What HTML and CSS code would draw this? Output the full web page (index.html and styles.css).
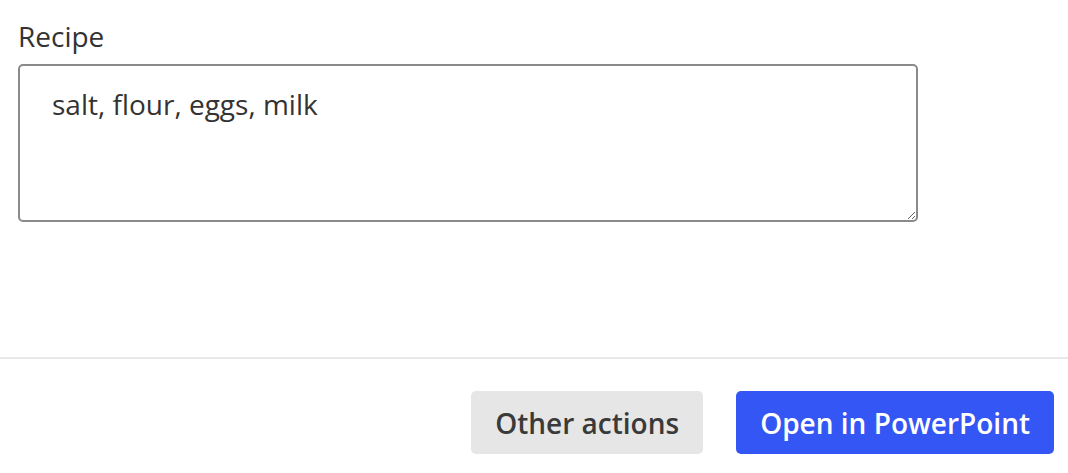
FILE: index.html
```html
<!DOCTYPE html>
<html lang="en">
<head>
<meta charset="utf-8">
<title>Recipe</title>
<link rel="stylesheet" href="styles.css">
</head>
<body>
<div class="dialog">
  <div class="content">
    <label class="field-label" for="recipe">Recipe</label>
    <textarea id="recipe" class="field-input">salt, flour, eggs, milk</textarea>
  </div>
  <div class="footer">
    <button class="btn btn-secondary" type="button">Other actions</button>
    <button class="btn btn-primary" type="button">Open in PowerPoint</button>
  </div>
</div>
</body>
</html>
```
FILE: styles.css
```css
html, body {
  margin: 0;
  padding: 0;
  background: #ffffff;
}
body {
  font-family: "Open Sans", "Noto Sans", sans-serif;
  color: #333333;
}
.dialog {
  display: flex;
  flex-direction: column;
  width: 1068px;
  height: 473px;
}
.content {
  box-sizing: border-box;
  height: 357px;
  padding: 15px 18px 0 18px;
  display: flex;
  flex-direction: column;
  gap: 7px;
}
.field-label {
  font-size: 28px;
  line-height: 42px;
  color: #333333;
}
.field-input {
  box-sizing: border-box;
  width: 900px;
  height: 158px;
  margin: 0;
  padding: 17px 32px;
  border: 2px solid #8a8a8a;
  border-radius: 5px;
  font-family: "Open Sans", "Noto Sans", sans-serif;
  font-size: 28px;
  line-height: 42px;
  color: #333333;
  resize: both;
  outline: none;
}
.footer {
  border-top: 2px solid #e8e8e8;
  display: flex;
  justify-content: flex-end;
  gap: 33px;
  padding: 32px 14px 0 0;
}
.btn {
  height: 63px;
  padding: 0 24px;
  border: none;
  border-radius: 5px;
  font-family: "Open Sans", "Noto Sans", sans-serif;
  font-size: 28px;
  font-weight: 600;
  cursor: pointer;
}
.btn-secondary {
  background: #e6e6e6;
  color: #3a3a3a;
}
.btn-primary {
  background: #3456f4;
  color: #ffffff;
}
```
